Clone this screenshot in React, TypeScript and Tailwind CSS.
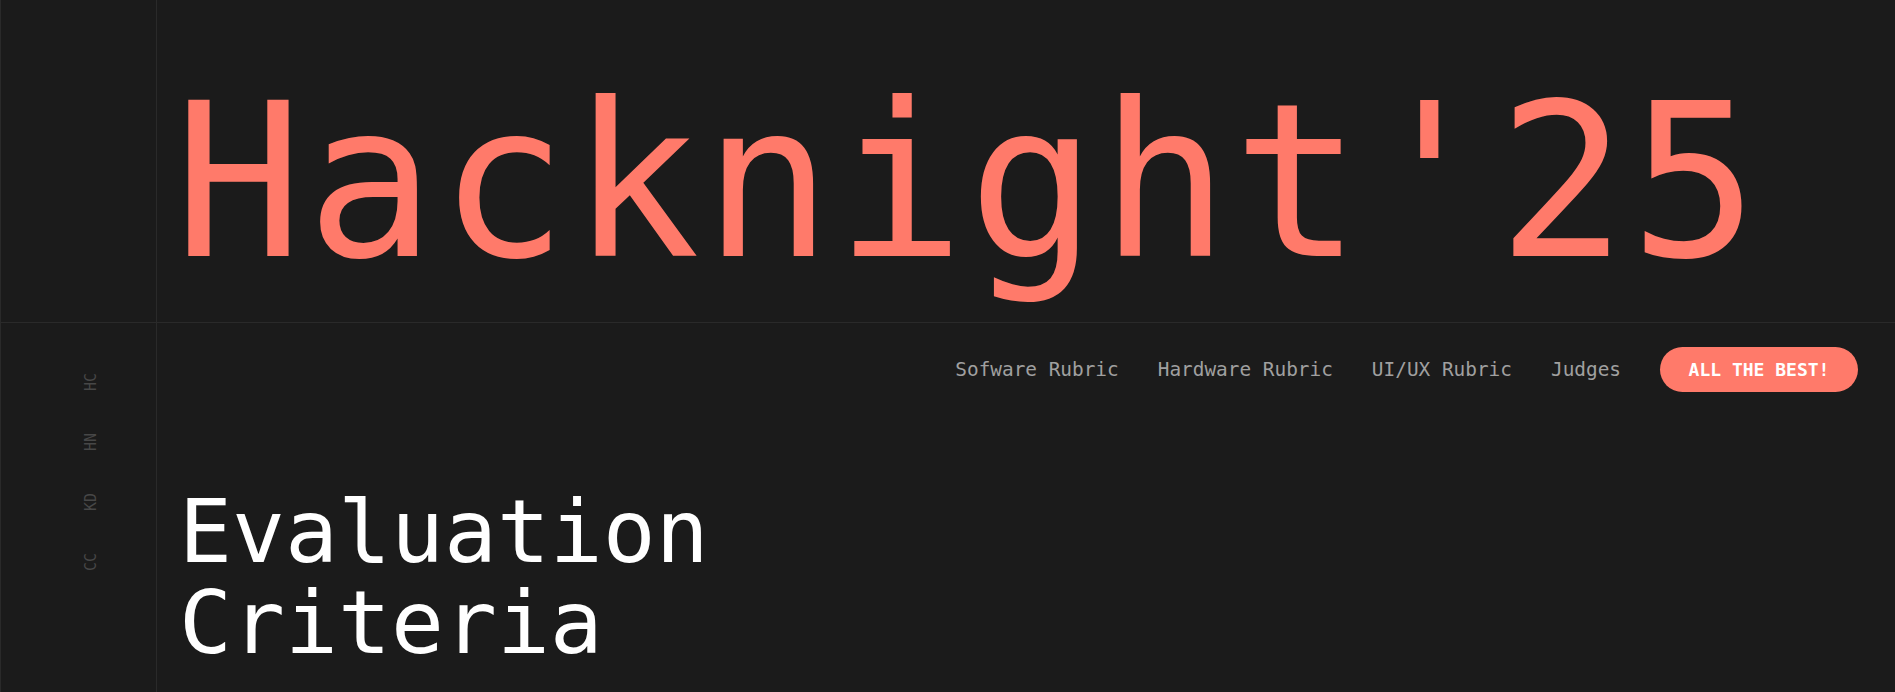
import React from "react";

const mono = { fontFamily: '"DejaVu Sans Mono", "Liberation Mono", monospace' };

export default function App() {
  const labels = ["HC", "HN", "KD", "CC"];
  const nav = ["Sofware Rubric", "Hardware Rubric", "UI/UX Rubric", "Judges"];
  return (
    <div
      className="w-[1895px] h-[692px] overflow-hidden bg-[#1b1b1b] border-l border-[#2a2a2a] grid grid-cols-[156px_1fr] grid-rows-[323px_1fr]"
      style={mono}
    >
      <div className="border-r border-b border-[#2a2a2a]" />
      <div className="border-b border-[#2a2a2a] pl-[17px] pt-[75px]">
        <h1 className="text-[214px] leading-none text-[#ff7a6a] whitespace-nowrap tracking-[3.5px]">
          Hacknight'25
        </h1>
      </div>
      <div className="border-r border-[#2a2a2a] pt-[50px] pl-[84px]">
        <div className="flex flex-col gap-[42px] w-[13px] items-center">
          {labels.map((l) => (
            <span
              key={l}
              className="[writing-mode:vertical-rl] rotate-180 text-[15px] leading-none text-[#474747]"
            >
              {l}
            </span>
          ))}
        </div>
      </div>
      <div className="flex flex-col">
        <nav className="flex items-center justify-end gap-[39px] pt-[24px] pr-[37px]">
          {nav.map((n) => (
            <a key={n} className="text-[19.4px] leading-none text-[#a0a0a0] whitespace-nowrap">
              {n}
            </a>
          ))}
          <button className="w-[198px] h-[45px] rounded-full bg-[#ff7a6a] text-white text-[18px] font-bold leading-none">
            ALL THE BEST!
          </button>
        </nav>
        <div className="mt-[94px] pl-[22px] text-[88px] leading-[91px] text-white">
          <div className="h-[91px]">Evaluation</div>
          <div className="h-[91px]">Criteria</div>
        </div>
      </div>
    </div>
  );
}
